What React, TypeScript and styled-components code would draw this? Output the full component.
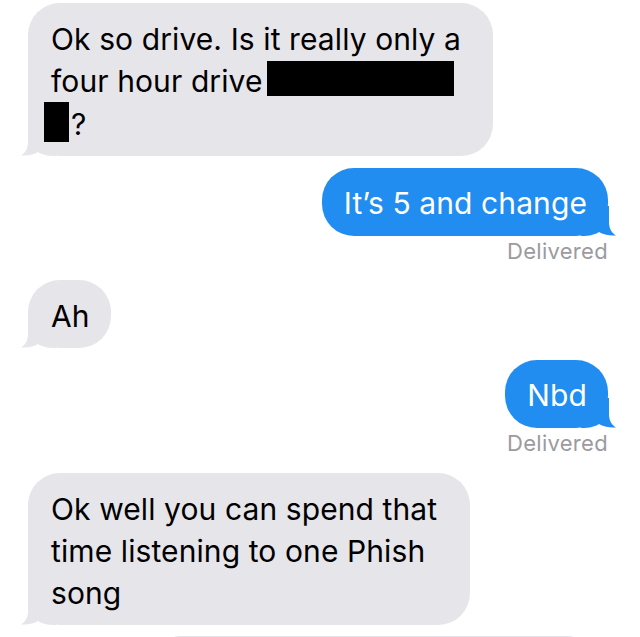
import React from "react";
import styled, { createGlobalStyle } from "styled-components";

const Global = createGlobalStyle`
  html, body { margin: 0; padding: 0; background: #ffffff; }
  body { width: 640px; height: 637px; overflow: hidden; }
`;

const Thread = styled.div`
  display: flex;
  flex-direction: column;
  height: 637px;
  box-sizing: border-box;
  overflow: hidden;
  padding-top: 3px;
  font-family: Inter, "Noto Sans", sans-serif;
  -webkit-font-smoothing: antialiased;
`;

const Row = styled.div<{ $side: "left" | "right"; $gap: number }>`
  display: flex;
  flex-shrink: 0;
  justify-content: ${(p) => (p.$side === "left" ? "flex-start" : "flex-end")};
  margin-top: ${(p) => p.$gap}px;
  padding: ${(p) => (p.$side === "left" ? "0 0 0 28px" : "0 32px 0 0")};
`;

const Bubble = styled.div<{ $out?: boolean; $w?: number }>`
  position: relative;
  box-sizing: border-box;
  ${(p) => (p.$w ? `width: ${p.$w}px;` : "")}
  background: ${(p) => (p.$out ? "#218df0" : "#e5e5ea")};
  color: ${(p) => (p.$out ? "#ffffff" : "#000000")};
  font-size: 30px;
  line-height: 42px;
  letter-spacing: 0.1px;
  padding: ${(p) => (p.$out ? "14px 21px 12px 22px" : "15px 21px 11px 23px")};
  border-radius: 32px;
`;

const TailSvg = styled.svg<{ $out?: boolean }>`
  position: absolute;
  bottom: 0;
  width: 36px;
  height: 30px;
  ${(p) => (p.$out ? "right: -9px; transform: scaleX(-1);" : "left: -8px;")}
`;

const Text = styled.span`
  position: relative;
  display: block;
`;

const Line = styled.span`
  display: block;
  white-space: nowrap;
`;

const Redact = styled.span<{ $w: number; $h: number; $drop: number; $ml: number }>`
  display: inline-block;
  width: ${(p) => p.$w}px;
  height: ${(p) => p.$h}px;
  margin-left: ${(p) => p.$ml}px;
  margin-right: 2px;
  background: #000000;
  vertical-align: ${(p) => -p.$drop}px;
`;

const Status = styled.div`
  align-self: flex-end;
  flex-shrink: 0;
  margin: 2px 32px 0 0;
  font-size: 22px;
  line-height: 26px;
  color: #9b9b9f;
  letter-spacing: 0.3px;
`;

const NextBubble = styled.div`
  flex-shrink: 0;
  margin: 11px 0 0 160px;
  width: 428px;
  height: 40px;
  box-sizing: border-box;
  border: 1px solid #e4e4e8;
  border-radius: 30px;
`;

function Tail({ out }: { out?: boolean }) {
  return (
    <TailSvg $out={out} viewBox="0 0 36 30" aria-hidden>
      <path
        d="M8 0 L8 16 C8 23 5 27 1 29.5 C8 30 14 28.5 18 26 C22 28.5 27 30 36 30 L36 0 Z"
        fill={out ? "#218df0" : "#e5e5ea"}
      />
    </TailSvg>
  );
}

export default function App() {
  return (
    <>
      <Global />
      <Thread>
        <Row $side="left" $gap={0}>
          <Bubble $w={465}>
            <Tail />
            <Text>
              <Line>Ok so drive. Is it really only a</Line>
              <Line>
                four hour drive<Redact $ml={4} $w={187} $h={35} $drop={4} />
              </Line>
              <Line>
                <Redact $ml={-7} $w={25} $h={40} $drop={7} />?
              </Line>
            </Text>
          </Bubble>
        </Row>
        <Row $side="right" $gap={12}>
          <Bubble $out>
            <Tail out />
            <Text>It’s 5 and change</Text>
          </Bubble>
        </Row>
        <Status>Delivered</Status>
        <Row $side="left" $gap={16}>
          <Bubble>
            <Tail />
            <Text>Ah</Text>
          </Bubble>
        </Row>
        <Row $side="right" $gap={12}>
          <Bubble $out>
            <Tail out />
            <Text>Nbd</Text>
          </Bubble>
        </Row>
        <Status>Delivered</Status>
        <Row $side="left" $gap={17}>
          <Bubble $w={442}>
            <Tail />
            <Text>
              <Line>Ok well you can spend that</Line>
              <Line>time listening to one Phish</Line>
              <Line>song</Line>
            </Text>
          </Bubble>
        </Row>
        <NextBubble />
      </Thread>
    </>
  );
}
